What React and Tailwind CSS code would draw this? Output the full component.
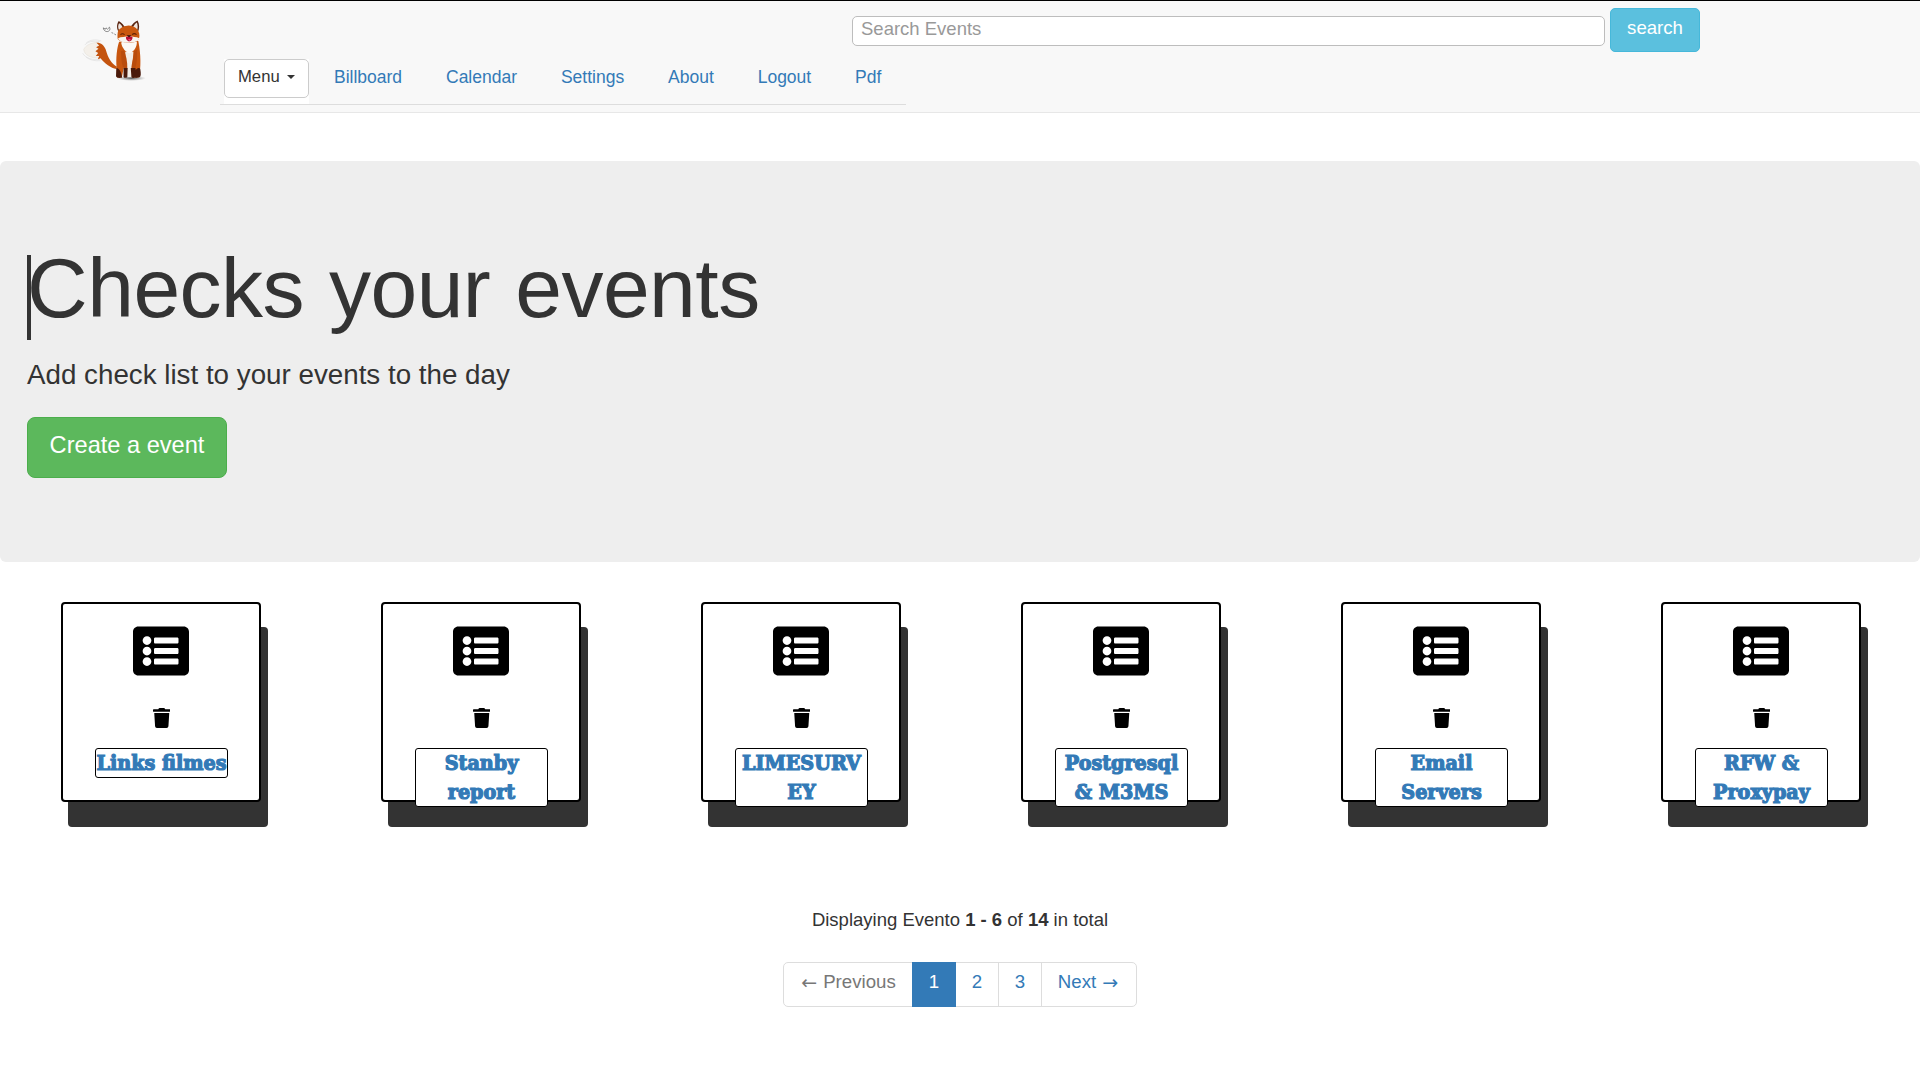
import { FaListAlt, FaTrash } from "react-icons/fa";

const links = ["Billboard", "Calendar", "Settings", "About", "Logout", "Pdf"];

const events = [
  ["Links filmes"],
  ["Stanby", "report"],
  ["LIMESURV", "EY"],
  ["Postgresql", "& M3MS"],
  ["Email", "Servers"],
  ["RFW &", "Proxypay"],
];

function FoxLogo() {
  return (
    <svg className="h-[71px] w-[72px]" viewBox="0 0 210 210" preserveAspectRatio="none" fill="none">
      <defs>
        <radialGradient id="shade">
          <stop offset="0" stopColor="#444" stopOpacity="0.9" />
          <stop offset="1" stopColor="#888" stopOpacity="0" />
        </radialGradient>
      </defs>
      <ellipse cx="150" cy="190" rx="42" ry="8" fill="url(#shade)" />
      {/* tail */}
      <g stroke="#d8d8d8" strokeWidth="1.5">
        <path d="M14 92C20 82 40 78 58 82M8 116C14 130 40 138 58 134M18 86C28 76 48 74 62 80M18 128C28 136 44 140 60 138" />
      </g>
      <path d="M52 84C34 84 16 92 11 105C12 120 30 132 58 130L62 108Z" fill="#f4f0ea" stroke="#d9d2c8" strokeWidth="1" />
      <path d="M48 85C60 84 70 92 75 105C82 130 92 148 108 156L106 163C90 160 72 146 60 131L52 134L56 124L46 124L53 115L45 110L54 103L47 98L56 93Z" fill="#c4540f" />
      {/* body */}
      <path d="M114 82C108 100 104 130 107 160L108 188L122 188L128 156L150 156L158 188L172 187C178 160 178 120 170 80Z" fill="#c8560f" />
      <path d="M132 112C134 140 126 165 128 186L152 186C150 160 154 140 156 112Z" fill="#f3eee8" />
      <path d="M120 84C122 100 134 114 145 116C158 110 166 98 166 82L144 76Z" fill="#fbf9f6" />
      <path d="M119 110C122 130 119 145 128 162L138 162C139 140 134 122 128 108ZM150 162L161 160C168 140 166 120 167 104L157 112C158 130 150 145 150 162Z" fill="#b94c0d" />
      {/* paws */}
      <path d="M106 160C114 162 120 168 123 188C114 190 107 189 105 184ZM127 160H139L138 187C132 190 129 189 127 186ZM148 160H162L163 187C156 190 152 190 150 186ZM162 166C168 158 174 158 176 164C178 176 178 184 174 187L162 189Z" fill="#4a1a0b" />
      {/* ears */}
      <path d="M111 50C106 40 108 28 113 21C122 26 129 35 132 42ZM146 40C152 30 161 21 168 19C174 30 174 44 168 56Z" fill="#5a2410" />
      <path d="M114 48C110 40 111 32 114 27C120 30 125 38 126 44ZM153 42C157 33 162 27 166 25C169 34 169 42 166 49Z" fill="#efe6df" />
      {/* head */}
      <path d="M111 50C120 38 130 35 142 34C156 35 166 42 170 50C175 60 174 70 170 76C162 84 152 86 143 84C130 86 116 82 110 74C109 66 109 58 111 50Z" fill="#c9580f" />
      <path d="M111 72C120 67 132 68 143 66C154 68 164 67 173 72C170 81 158 86 144 84C130 86 114 82 111 72Z" fill="#f8f4ef" />
      <path d="M118 61Q124 56 130 61M152 61Q158 55 165 61" stroke="#5d2208" strokeWidth="3" />
      <path d="M134 68C140 65 148 65 153 68C154 76 148 81 143 81C137 80 133 74 134 68Z" fill="#b90f34" />
      <path d="M136 63H150L143 69Z" fill="#2a1010" />
      <path d="M140 74H148L144 80Z" fill="#f0507a" />
      {/* chirp */}
      <path d="M68 41C69 50 77 54 83 51C88 48 88 44 86 39L80 45L76 41L74 45L68 41ZM92 55L97 57M100 59L105 62" stroke="#444" strokeWidth="1.8" />
    </svg>
  );
}

function Header() {
  return (
    <header className="flex h-[113px] border-t border-b border-t-black border-b-[#e7e7e7] bg-[#f8f8f8]">
      <div className="w-[220px] shrink-0 pt-[13px] pl-20">
        <FoxLogo />
      </div>
      <div className="flex flex-col pt-[7px]">
        <form className="ml-[632px] flex h-11 items-start gap-[5px]">
          <input
            className="mt-2 h-[30px] w-[753px] rounded-[5px] border border-[#bdbdbd] bg-white px-2 pb-[5px] text-[18.5px] leading-[22px] placeholder:text-[#999]"
            placeholder="Search Events"
          />
          <button
            type="button"
            className="h-11 w-[90px] rounded-[5px] border border-[#46b8da] bg-[#5bc0de] pb-[5px] text-[18.6px] leading-6 text-white"
          >
            search
          </button>
        </form>
        <nav className="mt-[7px] flex h-[46px] w-[686px] items-start border-b border-[#ddd] pl-1 text-[17.5px] leading-6 text-[#337ab7]">
          <div className="mr-[25px] h-[45px] w-[85px] bg-white">
            <button
              type="button"
              className="flex h-[39px] w-[85px] items-center gap-[7px] rounded-[5px] border border-[#ccc] bg-white pb-1 pl-[13px] text-[16.67px] text-[#333]"
            >
              Menu
              <span className="border-x-4 border-t-4 border-x-transparent border-t-[#333]" />
            </button>
          </div>
          <div className="mt-1.5 flex gap-[43.9px]">
            {links.map((l) => (
              <a key={l}>{l}</a>
            ))}
          </div>
        </nav>
      </div>
    </header>
  );
}

function Hero() {
  return (
    <section className="mt-12 h-[401px] rounded-[6px] bg-[#eee] pt-[85px] pl-[27px]">
      <h1 className="relative text-[84px] leading-[85px] tracking-[-0.5px] [word-spacing:2px]">
        <span className="absolute top-[9px] left-0 h-[85px] w-1 bg-[#333]" />
        Checks your events
      </h1>
      <p className="mt-6 text-[27.75px] leading-10">Add check list to your events to the day</p>
      <button
        type="button"
        className="mt-[22px] block h-[61px] w-[200px] rounded-[8px] border border-[#4cae4c] bg-[#5cb85c] pb-[5px] text-[23.6px] leading-[34px] text-white"
      >
        Create a event
      </button>
    </section>
  );
}

function EventCard({ lines }) {
  return (
    <div className="ml-[61px] h-[200px] w-[200px] rounded-[4px] border-2 border-black bg-white pt-[19px] shadow-[7px_25px_0_0_#333]">
      <FaListAlt className="ml-[70.4px] block size-14 text-black" />
      <FaTrash className="mt-[29px] ml-[89.6px] block h-5 w-[17.5px] text-black" />
      <div
        className={
          "mt-[20px] ml-8 w-[133px] rounded-[3px] border border-black bg-white text-center font-['DejaVu_Serif_Condensed','DejaVu_Serif',serif] text-[21.3px] leading-[28.5px] font-bold whitespace-nowrap text-[#337ab7] [-webkit-text-stroke:1.2px_#337ab7] " +
          (lines.length > 1 ? "h-[59px]" : "h-[30px]")
        }
      >
        {lines.map((l) => (
          <div key={l} className="-translate-y-[0.5px]">
            {l}
          </div>
        ))}
      </div>
    </div>
  );
}

function Pagination() {
  return (
    <nav className="mx-auto mt-[29px] flex h-[45px] w-[354px] rounded-[5px] border border-[#ddd] text-[18.67px] text-[#337ab7] *:flex *:items-center *:justify-center *:pb-[5px]">
      <span className="w-32 gap-[6px] pl-px text-[#777]">
        <span className="font-['DejaVu_Sans',sans-serif] text-[19px]">←</span>Previous
      </span>
      <span className="-my-px w-11 border-y border-[#337ab7] bg-[#337ab7] text-white">1</span>
      <span className="w-[43px] border-r border-[#ddd]">2</span>
      <span className="w-[43px] border-r border-[#ddd]">3</span>
      <span className="grow gap-[6px] pr-0.5">
        Next<span className="font-['DejaVu_Sans',sans-serif] text-[19px]">→</span>
      </span>
    </nav>
  );
}

export default function App() {
  return (
    <div className="h-[1080px] w-[1920px] overflow-hidden bg-white font-['Liberation_Sans',Arial,sans-serif] text-[#333]">
      <Header />
      <Hero />
      <main className="mt-10 grid grid-cols-6">
        {events.map((lines) => (
          <EventCard key={lines[0]} lines={lines} />
        ))}
      </main>
      <p className="mt-[105px] text-center text-[18.5px] leading-[26px]">
        Displaying Evento <b>1 - 6</b> of <b>14</b> in total
      </p>
      <Pagination />
    </div>
  );
}
